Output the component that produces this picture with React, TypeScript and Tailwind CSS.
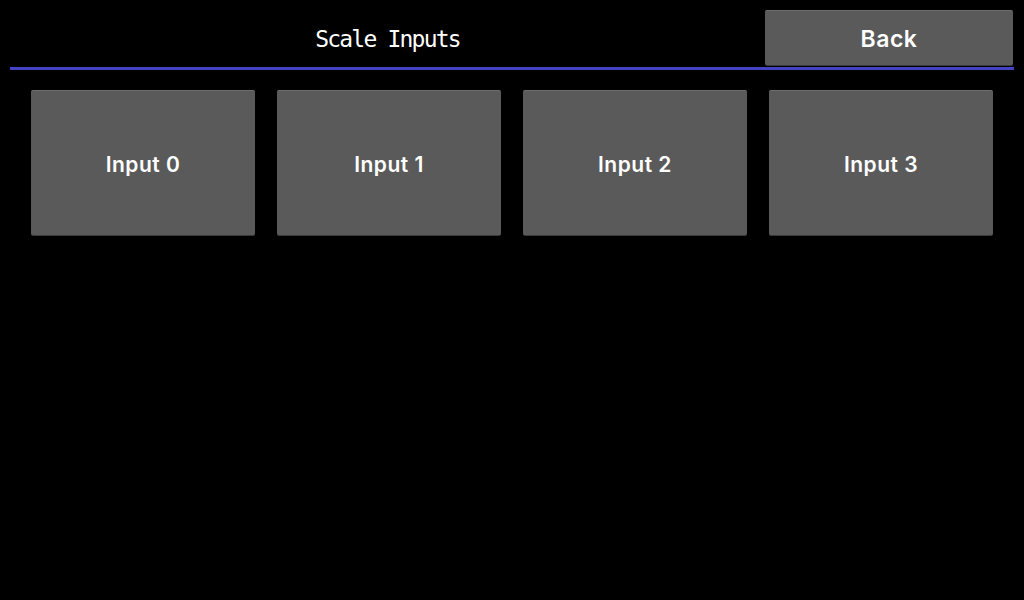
import React from 'react';

const inputs = ['Input 0', 'Input 1', 'Input 2', 'Input 3'];

function Tile({ label, className }: { label: string; className?: string }) {
  return (
    <button
      className={
        'flex items-center justify-center rounded-[2px] border-t border-t-[#6e6e6e] bg-[#5a5a5a] pt-[3px] text-white font-semibold tracking-[0.5px] shadow-[0_1px_0_#3a3a3a] ' +
        (className ?? '')
      }
      style={{ fontFamily: 'Inter, "Noto Sans", sans-serif' }}
    >
      {label}
    </button>
  );
}

export default function App() {
  return (
    <div className="h-[600px] w-[1024px] bg-black">
      <header className="flex pl-[10px] pr-[11px] pt-[10px]">
        <div className="flex flex-1 items-center justify-center pt-[4px]">
          <h1
            className="text-[23px] tracking-[-1.8px] text-white"
            style={{ fontFamily: '"DejaVu Sans Mono", monospace' }}
          >
            Scale Inputs
          </h1>
        </div>
        <Tile label="Back" className="h-[55px] w-[248px] text-[23px]" />
      </header>
      <div className="ml-[10px] mr-[10px] mt-[2px] h-[3px] bg-[#4343c4]" />
      <main className="grid grid-cols-4 gap-[22px] px-[31px] pt-[20px]">
        {inputs.map((name) => (
          <Tile key={name} label={name} className="h-[145px] text-[21px]" />
        ))}
      </main>
    </div>
  );
}
